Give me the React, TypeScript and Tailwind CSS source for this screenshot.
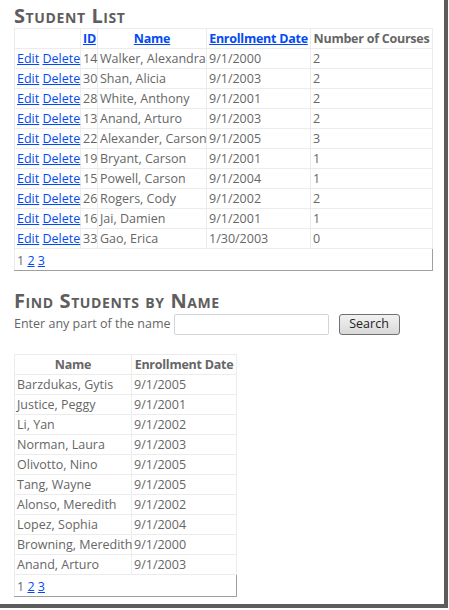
import React from "react";

const students = [
  ["14", "Walker, Alexandra", "9/1/2000", "2"],
  ["30", "Shan, Alicia", "9/1/2003", "2"],
  ["28", "White, Anthony", "9/1/2001", "2"],
  ["13", "Anand, Arturo", "9/1/2003", "2"],
  ["22", "Alexander, Carson", "9/1/2005", "3"],
  ["19", "Bryant, Carson", "9/1/2001", "1"],
  ["15", "Powell, Carson", "9/1/2004", "1"],
  ["26", "Rogers, Cody", "9/1/2002", "2"],
  ["16", "Jai, Damien", "9/1/2001", "1"],
  ["33", "Gao, Erica", "1/30/2003", "0"],
];

const found = [
  ["Barzdukas, Gytis", "9/1/2005"],
  ["Justice, Peggy", "9/1/2001"],
  ["Li, Yan", "9/1/2002"],
  ["Norman, Laura", "9/1/2003"],
  ["Olivotto, Nino", "9/1/2005"],
  ["Tang, Wayne", "9/1/2005"],
  ["Alonso, Meredith", "9/1/2002"],
  ["Lopez, Sophia", "9/1/2004"],
  ["Browning, Meredith", "9/1/2000"],
  ["Anand, Arturo", "9/1/2003"],
];

const link = "text-[#034af3] underline";
const td = "border border-[#ececec] px-[2px] h-[20px] whitespace-nowrap";
const th = td + " text-center tracking-[-0.25px]";

function Pager({ span }: { span: number }) {
  return (
    <tr>
      <td colSpan={span} className="h-[22px] px-[2px] pt-[2px]">
        1 <a className={link}>2</a> <a className={link}>3</a>
      </td>
    </tr>
  );
}

export default function App() {
  return (
    <div className="w-[449px] h-[610px] bg-white">
      <div
        className="w-[448px] h-[608px] bg-white border-r-[4px] border-b-[4px] border-[#5c5c5c] pl-[14px] pt-[4px] text-[12.5px] leading-[16px] text-[#666]"
        style={{ fontFamily: '"Open Sans", "Noto Sans", sans-serif' }}
      >
        <h2 className="text-[20px] leading-[24px] font-bold tracking-[0.6px] [font-variant:small-caps] text-[#5e5e5e]">
          Student List
        </h2>
        <table className="border-collapse border-l border-t border-[#ececec] border-r border-b border-r-[#a0a0a0] border-b-[#a0a0a0] w-[418px] table-fixed">
          <colgroup>
            <col className="w-[66px]" />
            <col className="w-[17px]" />
            <col className="w-[109px]" />
            <col className="w-[104px]" />
            <col className="w-[122px]" />
          </colgroup>
          <thead>
            <tr className="font-bold">
              <th className={th}></th>
              <th className={th}>
                <a className={link}>ID</a>
              </th>
              <th className={th}>
                <a className={link}>Name</a>
              </th>
              <th className={th}>
                <a className={link}>Enrollment Date</a>
              </th>
              <th className={th}>Number of Courses</th>
            </tr>
          </thead>
          <tbody>
            {students.map((s) => (
              <tr key={s[0]}>
                <td className={td}>
                  <a className={link}>Edit</a> <a className={link}>Delete</a>
                </td>
                <td className={td}>{s[0]}</td>
                <td className={td}>{s[1]}</td>
                <td className={td}>{s[2]}</td>
                <td className={td}>{s[3]}</td>
              </tr>
            ))}
            <Pager span={5} />
          </tbody>
        </table>

        <h2 className="mt-[18px] text-[20px] leading-[24px] font-bold tracking-[0.6px] [font-variant:small-caps] text-[#5e5e5e]">
          Find Students by Name
        </h2>
        <div className="flex items-center h-[22px]">
          <span>Enter any part of the name</span>
          <input
            type="text"
            className="ml-[3px] w-[155px] h-[21px] border border-[#cfd6dc] rounded-[2px] outline-none"
          />
          <button className="ml-[10px] w-[61px] h-[21px] border border-[#707070] rounded-[3px] bg-gradient-to-b from-[#f2f2f2] to-[#d8d8d8] text-[#222] text-[12.5px] leading-[16px]">
            Search
          </button>
        </div>

        <table className="mt-[19px] border-collapse border-l border-t border-[#ececec] border-r border-b border-r-[#a0a0a0] border-b-[#a0a0a0] w-[222px] table-fixed">
          <colgroup>
            <col className="w-[117px]" />
            <col className="w-[105px]" />
          </colgroup>
          <thead>
            <tr className="font-bold">
              <th className={th}>Name</th>
              <th className={th}>Enrollment Date</th>
            </tr>
          </thead>
          <tbody>
            {found.map((f) => (
              <tr key={f[0]}>
                <td className={td}>{f[0]}</td>
                <td className={td}>{f[1]}</td>
              </tr>
            ))}
            <Pager span={2} />
          </tbody>
        </table>
      </div>
    </div>
  );
}
